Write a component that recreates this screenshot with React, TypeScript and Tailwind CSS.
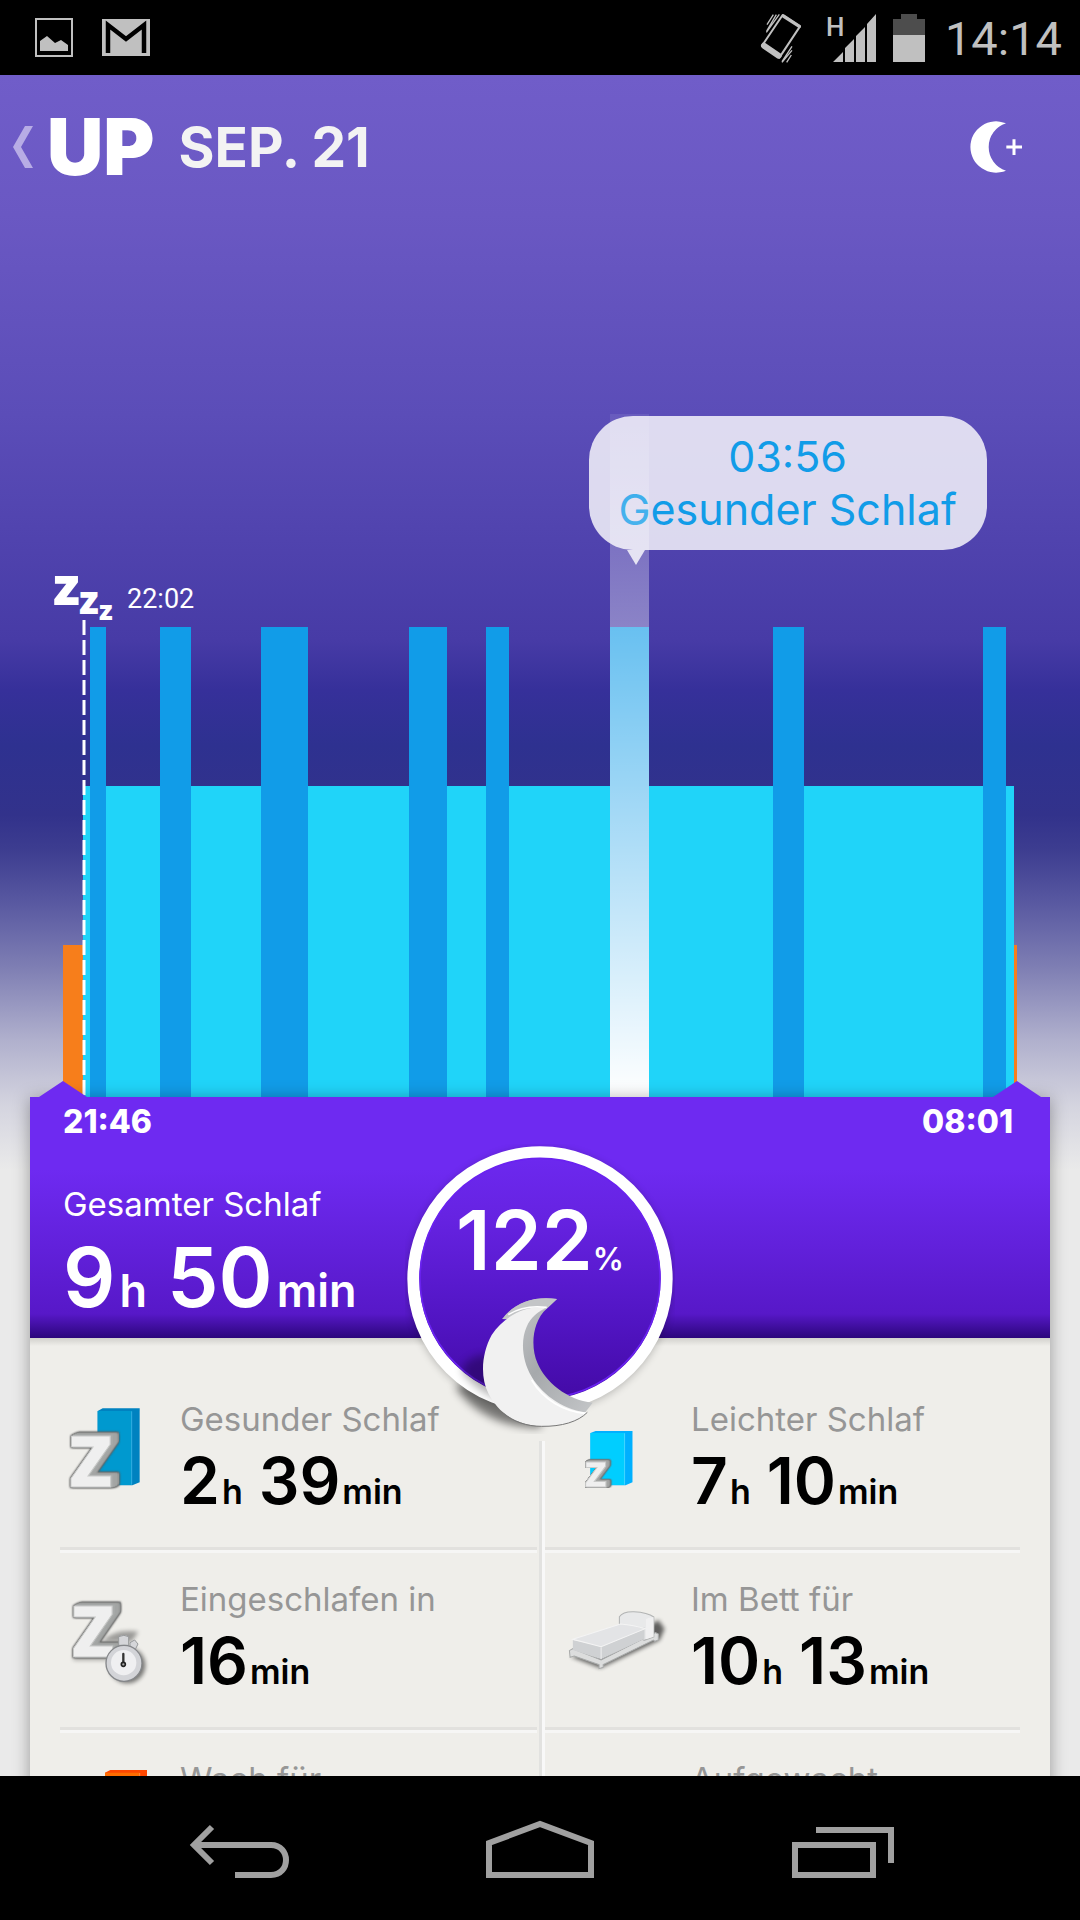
import type { ReactNode } from 'react';
import clsx from 'clsx';

type Part = { value: string; unit: string };

type Stat = {
  label: string;
  parts: Part[];
  icon: ReactNode;
};

// Chart space: 1080 x 683, baseline at the bottom
const CHART_HEIGHT = 683;

const deepSleep = [
  { x: 90, width: 16 },
  { x: 160, width: 31 },
  { x: 261, width: 47 },
  { x: 409, width: 38 },
  { x: 486, width: 23 },
  { x: 610, width: 39 },
  { x: 773, width: 31 },
  { x: 983, width: 23 },
];

const awake = [
  { x: 63, width: 20 },
  { x: 1014, width: 3 },
];

function StatusBar() {
  return (
    <div className="flex h-[75px] shrink-0 items-center bg-black pr-[18px] pl-[35px] text-[#c0c0c0]">
      <svg className="h-[39px] w-[38px]" viewBox="0 0 38 39" aria-hidden="true">
        <rect x="1" y="1" width="36" height="37" fill="none" stroke="#c0c0c0" strokeWidth="2" />
        <path d="M5 23l7-5 8 7 6-3 7 5v6H5z" fill="#c0c0c0" />
      </svg>
      <svg className="ml-[29px] h-[37px] w-12" viewBox="0 0 48 37" aria-hidden="true">
        <rect width="48" height="37" fill="#c0c0c0" />
        <path d="M6 34V6l18 14L42 6v28" fill="none" stroke="#000" strokeWidth="4.5" />
      </svg>
      <svg className="ml-auto h-[50px] w-[42px]" viewBox="0 0 126 150" fill="none" stroke="#c0c0c0" aria-hidden="true">
        <path d="M68 6 L120 40 L58 134 L6 98 Z" strokeWidth="6" strokeLinejoin="round" />
        <path d="M70 9l48 31" strokeWidth="10" strokeLinecap="round" />
        <path d="M12 98l44 30" strokeWidth="18" strokeLinecap="round" />
        <path d="M40 5L21 35M49 5L20 54M58 4L19 58M96 100L66 146M96 112L66 148M94 126L80 148" strokeWidth="4" />
      </svg>
      <svg className="ml-6 h-12 w-[51px]" viewBox="0 0 51 48" fill="#c0c0c0" aria-hidden="true">
        <text x="0" y="22" fontSize="26" fontWeight="500" fontFamily="Roboto, sans-serif">
          H
        </text>
        <path d="M7 48l10-10v10zM19 48V34l9-9v23zM30 48V22l9-9v35zM41 48V10l9-10v48z" />
      </svg>
      <svg className="ml-4 h-12 w-8" viewBox="0 0 32 48" aria-hidden="true">
        <path d="M0 5h8V0h16v5h8v16H0z" fill="#4d4d4d" />
        <path d="M0 21h32v27H0z" fill="#c0c0c0" />
      </svg>
      <span className="ml-5 pt-0.5 font-['Roboto',sans-serif] text-[47px] leading-none">14:14</span>
    </div>
  );
}

function Header() {
  return (
    <header className="flex h-36 items-center pr-[57px] pl-[13px] text-white">
      <button type="button" className="flex items-center" aria-label="UP">
        <svg className="h-[42px] w-5" viewBox="0 0 20 42" aria-hidden="true">
          <path d="M12 0h8L8 21l12 21h-8L0 21z" fill="#b7ace5" />
        </svg>
        <span className="ml-3.5 text-[78px] leading-none font-black">UP</span>
      </button>
      <h1 className="ml-6 text-[55px] leading-none font-bold text-[#f3f3f3]">SEP. 21</h1>
      <button type="button" className="ml-auto" aria-label="Add sleep">
        <svg className="h-[54px] w-[53px]" viewBox="810 360 159 162" aria-hidden="true">
          <path d="M918 370A77 77 0 1 0 918 512A74.5 74.5 0 0 1 918 370Z" fill="#fff" />
          <path d="M919 441h47M942 418v47" stroke="#fff" strokeWidth="9" />
        </svg>
      </button>
    </header>
  );
}

function SleepChart() {
  return (
    <div className="relative mt-[195px]">
      <svg
        className="block h-[683px] w-full"
        viewBox="0 0 1080 683"
        preserveAspectRatio="none"
        role="img"
        aria-label="Schlaf"
      >
        <rect x="83" y="372" width="931" height={CHART_HEIGHT - 372} fill="#20d4f9" />
        {awake.map((bar) => (
          <rect key={bar.x} x={bar.x} y="531" width={bar.width} height={CHART_HEIGHT - 531} fill="#f77e1b" />
        ))}
        {deepSleep.map((bar) => (
          <rect key={bar.x} x={bar.x} y="213" width={bar.width} height={CHART_HEIGHT - 213} fill="#119ce8" />
        ))}
        <path d="M84 206V683" stroke="#fff" strokeWidth="3" strokeDasharray="15 5" />
        <g fill="#fff" fontWeight="900" fontFamily="Open Sans, sans-serif">
          <text x="53" y="191" fontSize="53">z</text>
          <text x="79" y="200" fontSize="39">z</text>
          <text x="99" y="206" fontSize="27">z</text>
        </g>
        <text x="127" y="194" fill="#fff" fontSize="27" fontFamily="Roboto, sans-serif">
          22:02
        </text>
      </svg>

      {/* Tooltip of the selected phase */}
      <div className="absolute top-[2px] left-[54.5%] flex h-[134px] w-[398px] flex-col items-center justify-center rounded-[44px] bg-white/80 text-[43px] leading-[53px] text-[#119ce8]">
        <span>03:56</span>
        <span className="whitespace-nowrap">Gesunder Schlaf</span>
        <svg className="absolute top-full left-[38px] h-[15px] w-[18px]" viewBox="0 0 18 15" aria-hidden="true">
          <path d="M0 0h18L9 15z" fill="#fff" fillOpacity="0.8" />
        </svg>
      </div>
      <div className="absolute inset-y-0 left-[56.5%] w-[3.6%] bg-linear-to-b from-white/8 to-white" />
    </div>
  );
}

function Duration({ parts, size }: { parts: Part[]; size: 'lg' | 'md' }) {
  return (
    <p
      className={clsx(
        'flex items-baseline font-semibold whitespace-nowrap',
        size === 'lg' ? 'gap-5 text-[82px] leading-[96px]' : 'gap-4 text-[64px] leading-[72px]'
      )}
    >
      {parts.map((part) => (
        <span key={part.unit}>
          {part.value}
          <span className={size === 'lg' ? 'ml-1 text-[45px]' : 'ml-0.5 text-[34px]'}>{part.unit}</span>
        </span>
      ))}
    </p>
  );
}

function ScoreBadge() {
  return (
    <div className="absolute top-[47px] left-1/2 z-10 w-[270px] -translate-x-1/2 text-white">
      <svg className="block h-[290px] w-full" viewBox="75 72 810 870" aria-hidden="true">
        <defs>
          <linearGradient id="disc" x1="0" y1="0" x2="0" y2="1">
            <stop offset="0" stopColor="#6d29f0" />
            <stop offset="0.25" stopColor="#6623e2" />
            <stop offset="0.65" stopColor="#5215c4" />
            <stop offset="1" stopColor="#4209a4" />
          </linearGradient>
          <linearGradient id="rim" x1="0" y1="0" x2="1" y2="1">
            <stop offset="0" stopColor="#c8cacc" />
            <stop offset="0.5" stopColor="#a6a9ac" />
            <stop offset="1" stopColor="#c4c6c8" />
          </linearGradient>
          <filter id="soft" x="-30%" y="-30%" width="160%" height="160%">
            <feGaussianBlur stdDeviation="12" />
          </filter>
        </defs>
        <circle cx="480" cy="482" r="396" fill="#000" opacity="0.25" filter="url(#soft)" />
        <path d="M225 800C280 880 370 922 480 924L500 860L300 780Z" fill="#000" opacity="0.5" filter="url(#soft)" />
        <circle cx="480" cy="477" r="380" fill="url(#disc)" stroke="#fff" strokeWidth="36" />
        <circle cx="480" cy="475" r="360" fill="none" stroke="#6a22f0" strokeWidth="5" />
        <path d="M330 705C295 700 260 715 245 750C265 790 320 830 400 856Z" fill="#000" opacity="0.3" filter="url(#soft)" />
        <path
          d="M372 590C410 545 465 528 531 537L500 566C455 606 452 684 472 728C495 784 560 840 638 848L612 882C560 880 480 840 445 780C400 700 420 620 460 580Z"
          fill="url(#rim)"
        />
        <path d="M366 597C410 545 465 528 531 537L500 566L420 600Z" fill="#c3c5c7" />
        <path
          d="M500 562C440 556 375 585 335 645C305 700 300 770 325 820C355 880 410 916 485 919C545 920 595 905 622 877C560 872 490 830 455 770C425 720 422 660 440 620C452 592 475 575 500 562Z"
          fill="#f1f1f1"
        />
        <path d="M385 584C420 562 460 557 500 562" fill="none" stroke="#fff" strokeWidth="5" />
        <path d="M455 780C490 840 555 876 618 880" fill="none" stroke="#fff" strokeWidth="5" />
        <path d="M370 880C400 905 440 919 485 919C545 920 595 905 622 877" fill="none" stroke="#777" strokeWidth="3" />
      </svg>
      <p className="absolute inset-x-0 top-[49px] text-center text-[82px] leading-[96px] font-semibold">
        122<span className="text-[31px]">%</span>
      </p>
    </div>
  );
}

// Extruded letter used by the sleep icons
function SolidZ({ x, y, size, small = false }: { x: number; y: number; size: number; small?: boolean }) {
  return (
    <text
      x={x}
      y={y}
      fontSize={size}
      fontWeight="800"
      fontFamily="Open Sans, sans-serif"
      fill="#efefef"
      stroke="#c9cac9"
      strokeWidth="3"
      className={
        small
          ? '[filter:drop-shadow(4px_-2px_0_#a3a5a4)_drop-shadow(4px_-1px_0_#a3a5a4)_drop-shadow(4px_-1px_0_#989a99)_drop-shadow(0_0_2px_#555)_drop-shadow(0_0_2px_#555)]'
          : '[filter:drop-shadow(6px_-2px_0_#a9abaa)_drop-shadow(6px_-2px_0_#a3a5a4)_drop-shadow(6px_-2px_0_#a3a5a4)_drop-shadow(6px_-2px_0_#989a99)_drop-shadow(0_0_3px_#555)_drop-shadow(0_0_2px_#555)]'
      }
    >
      Z
    </text>
  );
}

const iconClass = 'mt-7 h-28 w-28 shrink-0 overflow-visible';

const stats: Stat[] = [
  {
    label: 'Gesunder Schlaf',
    parts: [
      { value: '2', unit: 'h' },
      { value: '39', unit: 'min' },
    ],
    icon: (
      <svg className={iconClass} viewBox="114 123 336 336" aria-hidden="true">
        <path d="M203 153l15-8h111v222l-22 9H203z" fill="#0082c0" />
        <path d="M203 153h103v222H203z" fill="#0099cf" />
        <path d="M305 154v220" stroke="#33aee0" strokeWidth="3" />
        <SolidZ x={116} y={381} size={215} />
      </svg>
    ),
  },
  {
    label: 'Leichter Schlaf',
    parts: [
      { value: '7', unit: 'h' },
      { value: '10', unit: 'min' },
    ],
    icon: (
      <svg className={iconClass} viewBox="81 123 325 336" preserveAspectRatio="none" aria-hidden="true">
        <path d="M149 219l15-6h107v154l-20 9H149z" fill="#00b0ff" />
        <path d="M149 219h99v156h-99z" fill="#00ceff" />
        <path d="M248 220v154" stroke="#40d6ff" strokeWidth="3" />
        <SolidZ x={132} y={380} size={106} small />
      </svg>
    ),
  },
  {
    label: 'Eingeschlafen in',
    parts: [{ value: '16', unit: 'min' }],
    icon: (
      <svg className={iconClass} viewBox="114 663 336 336" aria-hidden="true">
        <defs>
          <filter id="drop" x="-30%" y="-30%" width="160%" height="160%">
            <feGaussianBlur stdDeviation="6" />
          </filter>
        </defs>
        <path d="M215 845c30-30 70-36 110-30l-20 30zM130 900h110v-10H130z" fill="#000" opacity="0.35" filter="url(#drop)" />
        <SolidZ x={124} y={890} size={212} />
        <circle cx="292" cy="916" r="54" fill="#000" opacity="0.5" filter="url(#drop)" />
        <path d="M266 830q16-8 30 0v26h-30zM300 848l14-8 10 12-8 16-16-4z" fill="#d5d6d9" stroke="#97999b" strokeWidth="3" />
        <circle cx="282" cy="910" r="54" fill="#d3d4d8" stroke="#85878a" strokeWidth="4" />
        <circle cx="281" cy="908" r="38" fill="#efeff1" />
        <path d="M280 882v30" stroke="#333" strokeWidth="7" strokeLinecap="round" />
        <circle cx="280" cy="913" r="6" fill="#aaa" stroke="#222" strokeWidth="5" />
      </svg>
    ),
  },
  {
    label: 'Im Bett für',
    parts: [
      { value: '10', unit: 'h' },
      { value: '13', unit: 'min' },
    ],
    icon: (
      <svg className={iconClass} viewBox="81 663 325 336" preserveAspectRatio="none" aria-hidden="true">
        <path d="M92 890l86 34 172-84 14-34-18-26-90 60z" fill="#000" opacity="0.6" filter="url(#drop)" />
        <path d="M88 872l10-6 82 34 158-82 8 4v18l-10 4-4-4-146 74v8l-12 4v-12l-72-26-12 4z" fill="#dcdddd" stroke="#a9abab" strokeWidth="3" />
        <path d="M233 800v-30q10-16 42-15 40 2 58 16v60l-28 10z" fill="#e8e9ea" stroke="#b2b4b4" strokeWidth="3" />
        <path d="M98 840v30l82 28 126-62v-34l-126 56z" fill="#cfd1d3" />
        <path d="M98 838l138-46q40 4 72 14l-128 54z" fill="#e3e4e6" stroke="#f4f4f4" strokeWidth="3" />
        <path d="M180 862v34" stroke="#efefef" strokeWidth="3" />
        <path d="M310 778v60l22-8v-58q-16 0-22 6z" fill="#f0f0f1" />
      </svg>
    ),
  },
  {
    label: 'Wach für',
    parts: [{ value: '16', unit: 'min' }],
    icon: (
      <svg className={iconClass} viewBox="114 1203 336 336" aria-hidden="true">
        <path d="M225 1238l16-8h110v160H225z" fill="#ff4800" />
        <path d="M225 1238h104v150H225z" fill="#ff6d00" />
        <path d="M329 1239v150" stroke="#ff8a3d" strokeWidth="3" />
      </svg>
    ),
  },
  {
    label: 'Aufgewacht',
    parts: [{ value: '0', unit: 'x' }],
    icon: <div className="w-28 shrink-0" />,
  },
];

function StatCell({ stat, right }: { stat: Stat; right: boolean }) {
  return (
    <div
      className={clsx(
        'flex h-[180px] border-b-3 border-[#f6f6f5] shadow-[inset_0_-3px_0_#e2e1de]',
        right ? 'gap-3 pl-6' : 'pl-2'
      )}
    >
      {stat.icon}
      <div className="pt-[26px]">
        <p className="text-[33px] leading-10 whitespace-nowrap text-[#969696]">{stat.label}</p>
        <div className="mt-1.5 text-black">
          <Duration parts={stat.parts} size="md" />
        </div>
      </div>
    </div>
  );
}

function SummaryPanel() {
  return (
    <div className="relative h-[241px] bg-linear-to-b from-[#6e2af1] from-30% via-[#5718c8] via-90% to-[#2c067c] px-[33px] pt-[5px] text-white">
      <svg className="absolute bottom-full left-[9px] h-4 w-12" viewBox="0 0 48 16" aria-hidden="true">
        <path d="M0 16L24 0l24 16z" fill="#6e2af1" />
      </svg>
      <svg className="absolute right-[9px] bottom-full h-4 w-12" viewBox="0 0 48 16" aria-hidden="true">
        <path d="M0 16L24 0l24 16z" fill="#6e2af1" />
      </svg>
      <div className="flex justify-between text-[32px] leading-10 font-extrabold">
        <span>21:46</span>
        <span className="mr-1">08:01</span>
      </div>
      <p className="mt-[42px] text-[33px] leading-10">Gesamter Schlaf</p>
      <div className="mt-1.5">
        <Duration
          size="lg"
          parts={[
            { value: '9', unit: 'h' },
            { value: '50', unit: 'min' },
          ]}
        />
      </div>
      <ScoreBadge />
    </div>
  );
}

function NavBar() {
  return (
    <nav className="flex h-36 shrink-0 items-center justify-center bg-black" aria-label="System">
      <button type="button" className="flex w-72 justify-center" aria-label="Back">
        <svg className="h-[60px] w-[110px]" viewBox="181 1818 110 60" fill="none" stroke="#a0a0a0" strokeWidth="6" aria-hidden="true">
          <path d="M212 1827L194 1845l18 18M196 1845h75c20 0 20 30 0 30h-36" />
        </svg>
      </button>
      <button type="button" className="flex w-80 justify-center" aria-label="Home">
        <svg className="h-[60px] w-[110px]" viewBox="485 1818 110 60" fill="none" stroke="#a0a0a0" strokeWidth="6" aria-hidden="true">
          <path d="M489 1875v-32l51-19 51 19v32z" />
        </svg>
      </button>
      <button type="button" className="flex w-72 justify-center" aria-label="Recent apps">
        <svg className="h-[60px] w-[110px]" viewBox="789 1818 110 60" fill="none" stroke="#a0a0a0" strokeWidth="6" aria-hidden="true">
          <path d="M795 1845h78v30h-78zM816 1830h75v33" />
        </svg>
      </button>
    </nav>
  );
}

export default function App() {
  return (
    <div className="flex h-screen flex-col overflow-hidden bg-[#eaeaea] font-['Inter',sans-serif]">
      <StatusBar />
      <main className="min-h-0 flex-1 overflow-hidden bg-[linear-gradient(to_bottom,#705dc9_0,#6a58c3_140px,#5b4db8_340px,#473ba6_565px,#36309a_615px,#2e3190_670px,#32328b_740px,#3d3d90_775px,#5757a0_825px,#8080b4_895px,#b0b0cd_965px,#d4d4df_1030px,#eaeaea_1095px)]">
        <Header />
        <SleepChart />
        <section className="relative mx-[30px] bg-[#efeeea] shadow-[0_2px_16px_rgba(0,0,0,0.35)]">
          <SummaryPanel />
          <div className="h-2 bg-linear-to-b from-[#d2d1cd] to-[#efeeea]" />
          <div className="relative grid grid-cols-2 gap-x-1.5 px-[30px] pt-[27px]">
            {stats.map((stat, i) => (
              <StatCell key={stat.label} stat={stat} right={i % 2 === 1} />
            ))}
            <div className="absolute top-[95px] bottom-0 left-1/2 w-1.5 -translate-x-px border-r-3 border-l-3 border-r-[#f8f8f8] border-l-[#e2e2e0]" />
          </div>
        </section>
      </main>
      <NavBar />
    </div>
  );
}
